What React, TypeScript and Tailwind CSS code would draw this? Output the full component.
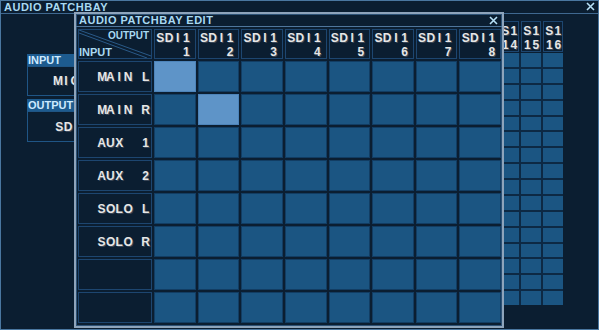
import React from "react";

const ROWS = ["MAIN L", "MAIN R", "AUX  1", "AUX  2", "SOLO L", "SOLO R", "", ""];
const COLS = [1, 2, 3, 4, 5, 6, 7, 8];
const BG_COLS = Array.from({ length: 16 }, (_, i) => i + 1);
const BG_ROWS = Array.from({ length: 16 }, (_, i) => i);

function isPatched(row: number, col: number) {
  return (row === 0 && col === 1) || (row === 1 && col === 2);
}

// the panel font is fixed-pitch: one slot per character
function Slots({ text, slot }: { text: string; slot: string }) {
  return (
    <span className="inline-flex">
      {text.split("").map((c, i) => (
        <span key={i} className={`inline-block text-center ${slot}`}>
          {c === " " ? "\u00a0" : c}
        </span>
      ))}
    </span>
  );
}

function CloseIcon() {
  return (
    <svg width="9" height="9" viewBox="0 0 9 9" className="block">
      <path d="M1 1 L8 8 M8 1 L1 8" stroke="#b6e0f6" strokeWidth="1.6" />
    </svg>
  );
}

function BackgroundWindow() {
  return (
    <>
      <div className="flex h-[13px] items-end justify-between border-b border-[#3f6890] pl-[3px] pr-[3px]">
        <span className="text-[11px] font-bold leading-none tracking-[0.5px] text-[#a9d9f2]">
          AUDIO PATCHBAY
        </span>
        <span className="mb-[2px]">
          <CloseIcon />
        </span>
      </div>

      <div className="flex">
        <div className="ml-[26px] mt-[40px] w-[120px]">
          <div className="h-[12px] bg-[#1d5b8f] pl-[1px] text-[11px] font-bold leading-[12px] text-[#cdeaff]">
            INPUT
          </div>
          <div className="flex h-[30px] items-center border border-[#1f5585] pl-[25px] text-[12px] font-bold text-[#e6e6e6] [text-shadow:1px_1px_0_#3a4656]">
            <Slots text="MIC 1" slot="w-[8.7px]" />
          </div>
          <div className="mt-[3px] h-[12px] bg-[#1d5b8f] pl-[1px] text-[11px] font-bold leading-[12px] text-[#cdeaff]">
            OUTPUT
          </div>
          <div className="flex h-[31px] items-center border border-[#1f5585] pl-[27px] text-[12px] font-bold text-[#e6e6e6] [text-shadow:1px_1px_0_#3a4656]">
            <Slots text="SDI1 1" slot="w-[8.7px]" />
          </div>
        </div>

        <div className="ml-auto mr-[35px] mt-[7px]">
          <div className="grid grid-cols-[repeat(16,20px)] gap-x-[2px]">
            {BG_COLS.map((c) => (
              <div
                key={c}
                className="h-[31px] overflow-hidden border border-[#1d4670] pl-[1px] pt-[2px] text-[12px] font-bold leading-[14px] text-[#e6e6e6] [text-shadow:1px_1px_0_#3a4656]"
              >
                <div><Slots text="S1" slot="w-[8.5px]" /></div>
                <div><Slots text={String(c).padStart(2, " ")} slot="w-[8.5px]" /></div>
              </div>
            ))}
          </div>
          <div className="mt-[1px] grid grid-cols-[repeat(16,20px)] gap-[2px] bg-[#0d2944]">
            {BG_ROWS.map((r) =>
              BG_COLS.map((c) => (
                <div key={`${r}-${c}`} className="h-[13.875px] bg-[#1b5582]" />
              )),
            )}
          </div>
        </div>
      </div>
    </>
  );
}

function PatchDialog() {
  return (
    <div className="absolute left-[73px] top-[11px] h-[316px] w-[430px] border-2 border-[#8ea4bb] bg-[#0b1e31] shadow-[inset_0_0_0_1px_#2d5276]">
      <div className="flex h-[13px] items-center justify-between border-b border-[#4f769c] pl-[3px] pr-[4px]">
        <span className="text-[11px] font-bold leading-none tracking-[0.5px] text-[#a9d9f2]">
          AUDIO PATCHBAY EDIT
        </span>
        <CloseIcon />
      </div>

      <div className="grid grid-cols-[74px_repeat(8,41.625px)] grid-rows-[30px_repeat(8,31px)] gap-[2px] pl-[2px] pt-[2px]">
        <div className="relative border border-[#1d4670]">
          <svg className="absolute inset-0" width="72" height="28" viewBox="0 0 72 28">
            <line x1="0" y1="0" x2="72" y2="26" stroke="#2a5a88" strokeWidth="1" />
            <line x1="0" y1="3" x2="68" y2="28" stroke="#2a5a88" strokeWidth="1" />
          </svg>
          <span className="absolute right-[2px] top-[1px] text-[10px] font-bold leading-none text-[#a9d9f2]">
            OUTPUT
          </span>
          <span className="absolute bottom-[0px] left-[0px] text-[11px] font-bold leading-none text-[#a9d9f2]">
            INPUT
          </span>
        </div>
        {COLS.map((c) => (
          <div
            key={c}
            className="border border-[#1d4670] pl-[1px] pt-[1px] text-[12px] font-bold leading-[14px] text-[#e6e6e6] [text-shadow:1px_1px_0_#3a4656]"
          >
            <div><Slots text="SDI1" slot="w-[8.7px]" /></div>
            <div><Slots text={`   ${c}`} slot="w-[8.7px]" /></div>
          </div>
        ))}

        {ROWS.map((label, r) => (
          <React.Fragment key={r}>
            <div className="flex items-center justify-end border border-[#1d4670] pr-[1px] text-[12px] font-bold text-[#e6e6e6] [text-shadow:1px_1px_0_#3a4656]">
              {label && <Slots text={label} slot="w-[8.8px]" />}
            </div>
            {COLS.map((c) => (
              <div
                key={c}
                className={
                  isPatched(r, c)
                    ? "border border-[#4d84ba] bg-[#5e94c8]"
                    : "border border-[#123d63] bg-[#1b5582]"
                }
              />
            ))}
          </React.Fragment>
        ))}
      </div>
    </div>
  );
}

export default function App() {
  return (
    <div className="relative h-[330px] w-[599px] overflow-hidden border border-[#4a77a0] bg-[#0b1e31] font-['Liberation_Sans',Arial,sans-serif]">
      <BackgroundWindow />
      <PatchDialog />
    </div>
  );
}
